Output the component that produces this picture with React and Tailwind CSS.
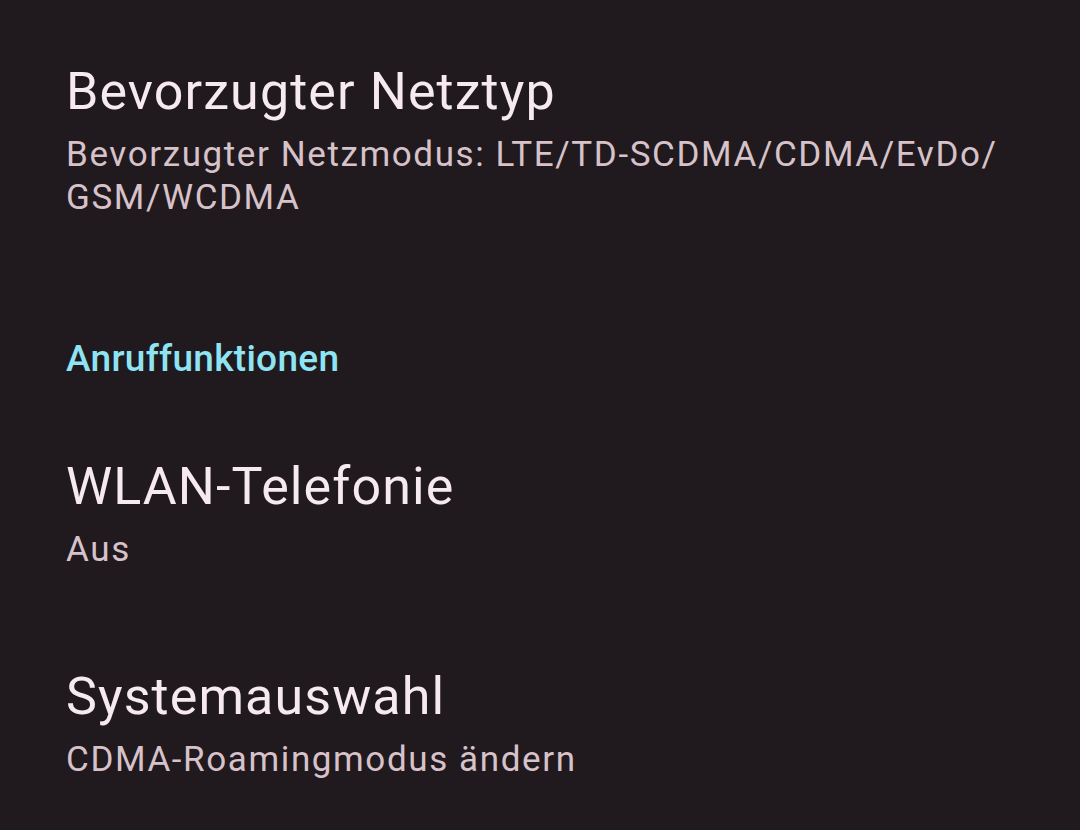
import React from "react";

const font = { fontFamily: "Roboto, 'Noto Sans', sans-serif" };

const PrefItem = ({ title, summary, className = "" }) => (
  <div className={`flex flex-col ${className}`}>
    <div className="text-[52px] leading-[60px] tracking-[1.1px] text-[#f6e9ef]">{title}</div>
    <div className="mt-[11px] text-[35px] leading-[43px] tracking-[1.6px] text-[#d7c2ca]">{summary}</div>
  </div>
);

const App = () => {
  return (
    <div
      className="w-[1080px] h-[830px] overflow-hidden bg-[#201a1e] pl-[66px] pr-[40px] pt-[62px]"
      style={font}
    >
      <PrefItem
        title="Bevorzugter Netztyp"
        summary={
          <>
            Bevorzugter Netzmodus: LTE/TD-SCDMA/CDMA/EvDo/
            <br />
            GSM/WCDMA
          </>
        }
      />
      <div className="mt-[118px] text-[37px] leading-[44px] font-medium tracking-[0.3px] text-[#8fe4f3]">
        Anruffunktionen
      </div>
      <PrefItem className="mt-[76px]" title="WLAN-Telefonie" summary="Aus" />
      <PrefItem className="mt-[96px]" title="Systemauswahl" summary="CDMA-Roamingmodus ändern" />
    </div>
  );
};

export default App;
